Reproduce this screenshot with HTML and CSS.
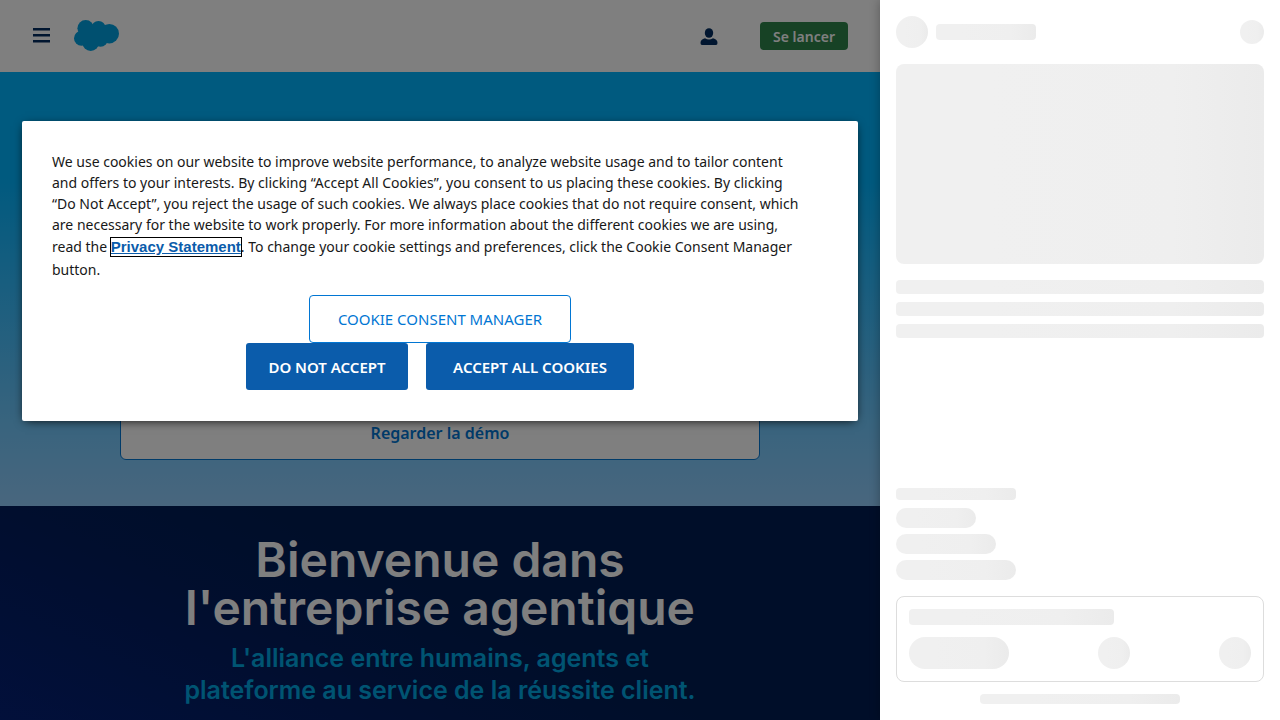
FILE: index.html
```html
<!DOCTYPE html>
<html lang="fr">
<head>
<meta charset="utf-8">
<meta name="viewport" content="width=device-width, initial-scale=1">
<title>Salesforce</title>
<link rel="stylesheet" href="styles.css">
</head>
<body>
<div class="site">
  <header class="topbar">
    <button class="icon-button" type="button" aria-label="Menu">
      <svg width="18" height="18" viewBox="0 0 18 18" fill="#032d60"><path d="M1 1h17v2.400H1zM1 7h17v2.400H1zM1 13h17v2.400H1z"/></svg>
    </button>
    <a class="logo" href="#" aria-label="Salesforce">
      <svg width="45" height="32" viewBox="0 0 45 32" fill="#00a1e0"><circle cx="11.700" cy="8.300" r="8.300"/><circle cx="24.500" cy="8.200" r="7.200"/><circle cx="35.300" cy="13.700" r="9.700"/><circle cx="7.500" cy="18.300" r="7.500"/><circle cx="16.700" cy="22.700" r="8.300"/><circle cx="26.500" cy="19.300" r="7.500"/><path d="M6 12 12 5 19 5 30 7 35 18 26 24 12 24z"/></svg>
    </a>
    <button class="icon-button account" type="button" aria-label="Connexion">
      <svg width="18" height="18" viewBox="0 0 18 18" fill="#032d60"><ellipse cx="9" cy="6" rx="4.200" ry="4.800"/><path d="M5 11.200Q9 14 13 11.200C16 12 17.500 13.500 17.500 16Q17.500 18 16 18H2Q.500 18 .500 16C.500 13.500 2 12 5 11.200z"/></svg>
    </button>
    <button class="start" type="button">Se lancer</button>
  </header>
  <main class="page">
    <section class="hero">
      <a class="demo" href="#">Regarder la démo</a>
    </section>
    <section class="welcome">
      <h1>Bienvenue dans<br>l'entreprise agentique</h1>
      <h2>L'alliance entre humains, agents et<br>plateforme au service de la réussite client.</h2>
    </section>
  </main>
  <div class="scrim"></div>
  <div class="consent" role="dialog" aria-label="Cookies">
    <p>We use cookies on our website to improve website performance, to analyze website usage and to tailor content<br>and offers to your interests. By clicking “Accept All Cookies”, you consent to us placing these cookies. By clicking<br>“Do Not Accept”, you reject the usage of such cookies. We always place cookies that do not require consent, which<br>are necessary for the website to work properly. For more information about the different cookies we are using,<br>read the <a class="privacy" href="#">Privacy Statement</a>. To change your cookie settings and preferences, click the Cookie Consent Manager<br>button.</p>
    <div class="actions">
      <button class="manager" type="button">COOKIE CONSENT MANAGER</button>
      <div class="choices">
        <button class="choice" type="button">DO NOT ACCEPT</button>
        <button class="choice choice-wide" type="button">ACCEPT ALL COOKIES</button>
      </div>
    </div>
  </div>
</div>
<aside class="panel" aria-busy="true">
  <div class="panel-head">
    <div class="bone avatar"></div>
    <div class="bone name"></div>
    <div class="bone close"></div>
  </div>
  <div class="bone media"></div>
  <div class="lines">
    <div class="bone line"></div>
    <div class="bone line"></div>
    <div class="bone line"></div>
  </div>
  <div class="suggestions">
    <div class="bone caption"></div>
    <div class="bone pill pill-s"></div>
    <div class="bone pill pill-m"></div>
    <div class="bone pill pill-l"></div>
  </div>
  <div class="composer">
    <div class="bone prompt"></div>
    <div class="tools">
      <div class="bone mode"></div>
      <div class="bone avatar"></div>
      <div class="bone avatar"></div>
    </div>
  </div>
  <div class="bone footnote"></div>
</aside>
</body>
</html>
```
FILE: styles.css
```css
* { box-sizing: border-box; }
body {
  margin: 0;
  height: 100vh;
  display: flex;
  overflow: hidden;
  background: #fff;
  font-family: "Noto Sans", "Open Sans", sans-serif;
}
button { font-family: inherit; cursor: pointer; }

.site { position: relative; flex: 1; min-width: 0; display: flex; flex-direction: column; overflow: hidden; }
.topbar { display: flex; align-items: center; height: 72px; padding: 0 32px; flex-shrink: 0; }
.icon-button { display: flex; padding: 0; border: 0; background: none; }
.logo { display: flex; margin-left: 24px; }
.account { margin-left: auto; }
.start {
  margin-left: 42px;
  padding: 0 13px;
  height: 28px;
  border: 0;
  border-radius: 4px;
  background: #2e844a;
  color: #fff;
  font-size: 14px;
  font-weight: 600;
}
.page { flex: 1; display: flex; flex-direction: column; }
.hero {
  display: flex;
  flex-direction: column;
  justify-content: flex-end;
  align-items: center;
  min-height: 434px;
  padding: 0 32px 46px;
  background: linear-gradient(#00b4ff 0, #00b4ff 24%, #60c4fd 72%, #70c8fc 80%, #92cdfc 100%);
}
.demo {
  width: 100%;
  max-width: 640px;
  padding: 14px;
  border: 1px solid #0176d3;
  border-radius: 6px;
  background: #fff;
  color: #0176d3;
  font-size: 16px;
  font-weight: 600;
  line-height: 24px;
  text-align: center;
  text-decoration: none;
}
.welcome {
  flex: 1;
  padding: 30px 32px 0;
  background: linear-gradient(25deg, #042076, #021c5c 35%, #001c52 55%);
  font-family: Inter, "Liberation Sans", sans-serif;
  text-align: center;
}
h1, h2 { margin: 0; font-weight: 600; }
h1 { color: #fff; font-size: 48px; line-height: 48px; }
h2 { margin-top: 10px; color: #00a8e4; font-size: 25px; line-height: 32px; }

.scrim { position: absolute; inset: 0; background: rgba(0, 0, 0, 0.5); }
.consent {
  position: absolute;
  top: 121px;
  left: 22px;
  right: 22px;
  padding: 30px 30px 31px;
  border-radius: 2px;
  background: #fff;
  box-shadow: 0 2px 10px -3px #000;
}
.consent p { margin: 0 0 15px; color: #181818; font-size: 14px; line-height: 21px; }
.privacy {
  display: inline-block;
  margin: 3px 0;
  outline: 1px solid #000;
  color: #0b5cab;
  font-family: "Liberation Sans", sans-serif;
  font-size: 15px;
  font-weight: 700;
  line-height: 18px;
}
.actions, .choices { display: flex; justify-content: center; }
.actions { flex-direction: column; align-items: center; }
.choices { gap: 18px; }
.manager {
  min-width: 262px;
  height: 48px;
  border: 1px solid #0176d3;
  border-radius: 4px;
  background: #fff;
  color: #0176d3;
  font-size: 15px;
}
.choice {
  min-width: 162px;
  height: 47px;
  border: 0;
  border-radius: 3px;
  background: #0b5cab;
  color: #fff;
  font-size: 15px;
  font-weight: 600;
}
.choice-wide { min-width: 208px; }

.panel {
  position: relative;
  display: flex;
  flex-direction: column;
  width: 400px;
  flex-shrink: 0;
  padding: 16px;
  background: #fff;
  box-shadow: 0 0 10px rgba(0, 0, 0, 0.3);
}
.bone { flex-shrink: 0; border-radius: 4px; background: linear-gradient(90deg, #f0f0f0 25%, #efefef 75%, #ebebeb); }
.panel-head { display: flex; align-items: center; gap: 8px; }
.avatar { width: 32px; height: 32px; border-radius: 50%; }
.name { width: 100px; height: 16px; }
.close { width: 24px; height: 24px; margin-left: auto; border-radius: 50%; }
.media { height: 200px; margin: 16px 0; border-radius: 8px; }
.lines { display: flex; flex-direction: column; gap: 8px; }
.line { height: 14px; }
.suggestions { display: flex; flex-direction: column; gap: 6px; margin-top: auto; }
.caption { width: 120px; height: 12px; margin-bottom: 2px; }
.pill { height: 20px; border-radius: 10px; }
.pill-s { width: 80px; }
.pill-m { width: 100px; }
.pill-l { width: 120px; }
.composer { margin: 16px 0 12px; padding: 12px; border: 1px solid #ddd; border-radius: 8px; }
.prompt { width: 60%; height: 16px; margin-bottom: 12px; }
.tools { display: flex; justify-content: space-between; }
.mode { width: 100px; height: 32px; border-radius: 16px; }
.footnote { align-self: center; width: 200px; height: 10px; }
```
